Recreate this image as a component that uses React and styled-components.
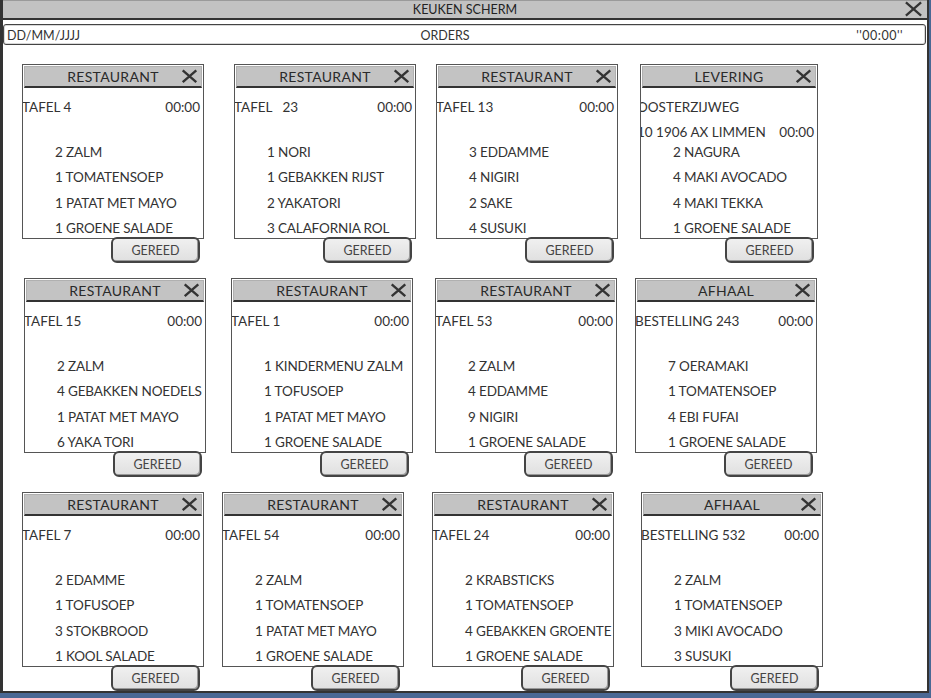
import React from "react";
import styled, { createGlobalStyle } from "styled-components";

const GlobalStyle = createGlobalStyle`
    html, body {
        margin: 0;
        padding: 0;
        background: #4a6894;
    }
    body {
        font-family: Lato, "Open Sans", sans-serif;
        color: #333;
    }
`;

const orders = [
    { type: "RESTAURANT", info: ["TAFEL 4"], items: ["2 ZALM", "1 TOMATENSOEP", "1 PATAT MET MAYO", "1 GROENE SALADE"], dx: 0 },
    { type: "RESTAURANT", info: ["TAFEL   23"], items: ["1 NORI", "1 GEBAKKEN RIJST", "2 YAKATORI", "3 CALAFORNIA ROL"], dx: 6 },
    { type: "RESTAURANT", info: ["TAFEL 13"], items: ["3 EDDAMME", "4 NIGIRI", "2 SAKE", "4 SUSUKI"], dx: 2 },
    { type: "LEVERING", info: ["OOSTERZIJWEG", "10 1906 AX LIMMEN"], items: ["2 NAGURA", "4 MAKI AVOCADO", "4 MAKI TEKKA", "1 GROENE SALADE"], dx: 0, w: 178, clip: true },
    { type: "RESTAURANT", info: ["TAFEL 15"], items: ["2 ZALM", "4 GEBAKKEN NOEDELS", "1 PATAT MET MAYO", "6 YAKA TORI"], dx: 2 },
    { type: "RESTAURANT", info: ["TAFEL 1"], items: ["1 KINDERMENU ZALM", "1 TOFUSOEP", "1 PATAT MET MAYO", "1 GROENE SALADE"], dx: 3 },
    { type: "RESTAURANT", info: ["TAFEL 53"], items: ["2 ZALM", "4 EDDAMME", "9 NIGIRI", "1 GROENE SALADE"], dx: 1 },
    { type: "AFHAAL", info: ["BESTELLING 243"], items: ["7 OERAMAKI", "1 TOMATENSOEP", "4 EBI FUFAI", "1 GROENE SALADE"], dx: -5 },
    { type: "RESTAURANT", info: ["TAFEL 7"], items: ["2 EDAMME", "1 TOFUSOEP", "3 STOKBROOD", "1 KOOL SALADE"], dx: 0 },
    { type: "RESTAURANT", info: ["TAFEL 54"], items: ["2 ZALM", "1 TOMATENSOEP", "1 PATAT MET MAYO", "1 GROENE SALADE"], dx: -6 },
    { type: "RESTAURANT", info: ["TAFEL 24"], items: ["2 KRABSTICKS", "1 TOMATENSOEP", "4 GEBAKKEN GROENTE", "1 GROENE SALADE"], dx: -2 },
    { type: "AFHAAL", info: ["BESTELLING 532"], items: ["2 ZALM", "1 TOMATENSOEP", "3 MIKI AVOCADO", "3 SUSUKI"], dx: 1 },
];

function CloseIcon({ size = 16, stroke = 2.6 }) {
    return (
        <svg width={size} height={size * 0.85} viewBox="0 0 20 17">
            <path d="M2 1.5 L18 15.5 M18 1.5 L2 15.5" stroke="#333" strokeWidth={stroke} strokeLinecap="butt" fill="none" />
        </svg>
    );
}

function OrderCard({ order }) {
    return (
        <CardWrap $dx={order.dx} $w={order.w}>
            <Card>
                <CardHeader>
                    <span />
                    <CardTitle>{order.type}</CardTitle>
                    <CardClose><CloseIcon size={17} stroke={2.8} /></CardClose>
                </CardHeader>
                <Info>
                    {order.info.map((line, i) => {
                        const last = i === order.info.length - 1;
                        return (
                            <InfoLine key={i} $clip={order.clip}>
                                <span>{line}</span>
                                {last && <span>00:00</span>}
                            </InfoLine>
                        );
                    })}
                </Info>
                <Items>
                    {order.items.map((v, i) => (
                        <Item key={i}>{v}</Item>
                    ))}
                </Items>
            </Card>
            <Button>GEREED</Button>
        </CardWrap>
    );
}

export default function App() {
    return (
        <>
            <GlobalStyle />
            <Page>
                <Window>
                    <TitleBar>
                        <span />
                        <WindowTitle>KEUKEN SCHERM</WindowTitle>
                        <TitleClose><CloseIcon size={19} stroke={2.4} /></TitleClose>
                    </TitleBar>
                    <OrdersBar>
                        <span>DD/MM/JJJJ</span>
                        <OrdersTitle>ORDERS</OrdersTitle>
                        <Clock>''00:00''</Clock>
                    </OrdersBar>
                    <Grid>
                        {orders.map((o, i) => (
                            <OrderCard key={i} order={o} />
                        ))}
                    </Grid>
                </Window>
            </Page>
        </>
    );
}

const Page = styled.div`
    width: 931px;
    height: 698px;
    overflow: hidden;
`;

const Window = styled.div`
    width: 929px;
    height: 693px;
    box-sizing: border-box;
    background: #fff;
    border-left: 3px solid #333;
    border-right: 2px solid #333;
    border-bottom: 2px solid #333;
    display: flex;
    flex-direction: column;
`;

const TitleBar = styled.div`
    height: 20px;
    box-sizing: border-box;
    background: #c2c2c2;
    border-top: 1px solid #9a9a9a;
    border-bottom: 2px solid #333;
    display: grid;
    grid-template-columns: 30px 1fr 30px;
    align-items: center;
`;

const WindowTitle = styled.span`
    text-align: center;
    font-size: 12.5px;
    color: #222;
    padding-top: 1px;
`;

const TitleClose = styled.span`
    display: flex;
    justify-content: flex-end;
    padding-right: 4px;
`;

const OrdersBar = styled.div`
    margin: 4px 1px 0 0;
    height: 22px;
    box-sizing: border-box;
    border: 1px solid #444;
    border-radius: 3px;
    box-shadow: inset 0 0 0 1px #d8d8d8;
    display: grid;
    grid-template-columns: 1fr auto 1fr;
    align-items: center;
    padding: 2px 22px 0 3px;
    font-size: 12.5px;
    color: #333;
`;

const OrdersTitle = styled.span`
    text-align: center;
    margin-right: 20px;
`;

const Clock = styled.span`
    text-align: right;
    letter-spacing: 0.5px;
`;

const Grid = styled.div`
    display: grid;
    grid-template-columns: repeat(4, 182px);
    column-gap: 24px;
    row-gap: 15px;
    padding: 19px 0 0 19px;
`;

const CardWrap = styled.div`
    display: flex;
    flex-direction: column;
    width: ${p => p.$w || 182}px;
    margin-left: ${p => p.$dx}px;
`;

const Card = styled.div`
    height: 175px;
    box-sizing: border-box;
    border: 1px solid #555;
    overflow: hidden;
    background: #fff;
`;

const CardHeader = styled.div`
    height: 22px;
    box-sizing: border-box;
    margin: 1px 1px 0;
    background: #c3c3c3;
    border: 1px solid #b0b0b0;
    border-bottom: 2px solid #333;
    display: grid;
    grid-template-columns: 24px 1fr 24px;
    align-items: center;
`;

const CardTitle = styled.span`
    text-align: center;
    font-size: 14px;
    letter-spacing: 0.3px;
    color: #2a2a2a;
`;

const CardClose = styled.span`
    display: flex;
    justify-content: flex-end;
    padding-right: 3px;
`;

const Info = styled.div`
    height: 45px;
    padding-top: 7px;
    box-sizing: content-box;
`;

const InfoLine = styled.div`
    height: 25px;
    line-height: 25px;
    display: flex;
    justify-content: space-between;
    font-size: 13.5px;
    white-space: pre;
    margin-left: ${p => (p.$clip ? "-4px" : "-1px")};
    padding-right: 3px;
`;

const Items = styled.div`
    padding-left: 32px;
`;

const Item = styled.div`
    height: 25.3px;
    line-height: 25px;
    font-size: 13.5px;
    letter-spacing: -0.15px;
    white-space: nowrap;
`;

const Button = styled.button`
    position: relative;
    align-self: flex-end;
    margin: -2px 4px 0 0;
    width: 89px;
    height: 26px;
    border: 2px solid #444;
    border-radius: 6px;
    background: linear-gradient(#f0f0f0, #e0e0e0);
    box-shadow: inset -1px -1px 0 #999;
    font-family: Lato, sans-serif;
    font-size: 12.5px;
    color: #444;
    padding: 0;
`;
